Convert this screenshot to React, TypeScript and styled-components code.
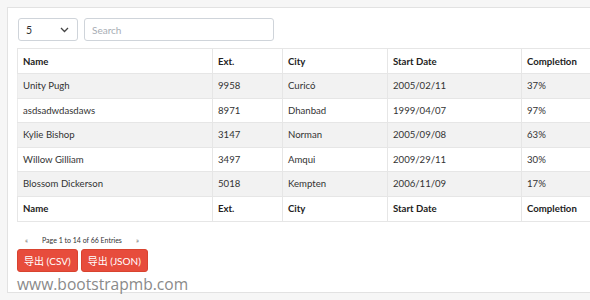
import React from "react";
import styled, { createGlobalStyle } from "styled-components";

const Global = createGlobalStyle`
  html, body { margin: 0; padding: 0; }
  body {
    background: #f6f6f6;
    font-family: Lato, "Noto Sans CJK SC", sans-serif;
    overflow: hidden;
    width: 590px;
    height: 300px;
  }
`;

const Page = styled.div`
  padding: 7px 0 0 7px;
`;

const Card = styled.div`
  width: 640px;
  height: 286px;
  box-sizing: border-box;
  background: #fff;
  border: 1px solid #e2e2e2;
  padding: 10px 9px 0 9px;
  display: flex;
  flex-direction: column;
`;

const Toolbar = styled.div`
  display: flex;
  gap: 6px;
  margin-left: 1px;
`;

const SelectBox = styled.div`
  width: 60px;
  height: 23px;
  box-sizing: border-box;
  border: 1px solid #cfd4da;
  border-radius: 3px;
  display: flex;
  align-items: center;
  justify-content: space-between;
  padding: 0 8px 0 7px;
  font-size: 10.5px;
  color: #333;
`;

const SearchBox = styled.div`
  width: 190px;
  height: 23px;
  box-sizing: border-box;
  border: 1px solid #cfd4da;
  border-radius: 3px;
  display: flex;
  align-items: center;
  padding: 0 7px;
  font-size: 10px;
  color: #a7adb4;
`;

const Table = styled.table`
  margin-top: 7px;
  border-collapse: collapse;
  width: 620px;
  table-layout: fixed;
  font-size: 9.6px;
  color: #333;
  border: 1px solid #e6e6e6;
`;

const Th = styled.th`
  text-align: left;
  font-weight: 700;
  height: 24px;
  padding: 0 5px;
  border: 1px solid #e6e6e6;
  color: #222;
`;

const Tr = styled.tr<{ $striped?: boolean }>`
  background: ${(p) => (p.$striped ? "#f2f2f2" : "#fff")};
`;

const Td = styled.td`
  height: 23.5px;
  padding: 0 5px;
  border: 1px solid #e6e6e6;
  border-left-color: #ececec;
`;

const Pager = styled.div`
  display: flex;
  align-items: center;
  font-size: 7px;
  color: #333;
  margin-top: 14px;
  height: 10px;
  padding-left: 8px;
`;

const PagerArrow = styled.span`
  font-size: 7px;
  color: #666;
`;

const PagerText = styled.span`
  margin: 0 14px 0 14px;
`;

const Buttons = styled.div`
  display: flex;
  gap: 3px;
  margin-top: 5px;
`;

const Btn = styled.div`
  background: #e74c3c;
  color: #fff;
  font-size: 10px;
  height: 23px;
  padding: 0 6px;
  border-radius: 3px;
  display: flex;
  align-items: center;
  border: 1px solid #d9432f;
  box-sizing: border-box;
`;

const Watermark = styled.div`
  font-family: "Open Sans", sans-serif;
  font-size: 15.6px;
  color: #8a8a8a;
  margin-top: 2px;
  line-height: 20px;
`;

const rows = [
  ["Unity Pugh", "9958", "Curicó", "2005/02/11", "37%"],
  ["asdsadwdasdaws", "8971", "Dhanbad", "1999/04/07", "97%"],
  ["Kylie Bishop", "3147", "Norman", "2005/09/08", "63%"],
  ["Willow Gilliam", "3497", "Amqui", "2009/29/11", "30%"],
  ["Blossom Dickerson", "5018", "Kempten", "2006/11/09", "17%"],
];

const widths = [195, 70, 105, 134, 116];
const heads = ["Name", "Ext.", "City", "Start Date", "Completion"];

export default function App() {
  return (
    <>
      <Global />
      <Page>
        <Card>
          <Toolbar>
            <SelectBox>
              <span>5</span>
              <svg width="9" height="6" viewBox="0 0 9 6">
                <path d="M1 1l3.5 3.5L8 1" fill="none" stroke="#444" strokeWidth="1.3" />
              </svg>
            </SelectBox>
            <SearchBox>Search</SearchBox>
          </Toolbar>
          <Table>
            <colgroup>
              {widths.map((w, i) => (
                <col key={i} style={{ width: w }} />
              ))}
            </colgroup>
            <thead>
              <Tr>
                {heads.map((h) => (
                  <Th key={h}>{h}</Th>
                ))}
              </Tr>
            </thead>
            <tbody>
              {rows.map((r, i) => (
                <Tr key={i} $striped={i % 2 === 0}>
                  {r.map((c, j) => (
                    <Td key={j}>{c}</Td>
                  ))}
                </Tr>
              ))}
            </tbody>
            <tfoot>
              <Tr>
                {heads.map((h) => (
                  <Th key={h}>{h}</Th>
                ))}
              </Tr>
            </tfoot>
          </Table>
          <Pager>
            <PagerArrow>«</PagerArrow>
            <PagerText>Page 1 to 14 of 66 Entries</PagerText>
            <PagerArrow>»</PagerArrow>
          </Pager>
          <Buttons>
            <Btn>导出 (CSV)</Btn>
            <Btn>导出 (JSON)</Btn>
          </Buttons>
          <Watermark>www.bootstrapmb.com</Watermark>
        </Card>
      </Page>
    </>
  );
}
